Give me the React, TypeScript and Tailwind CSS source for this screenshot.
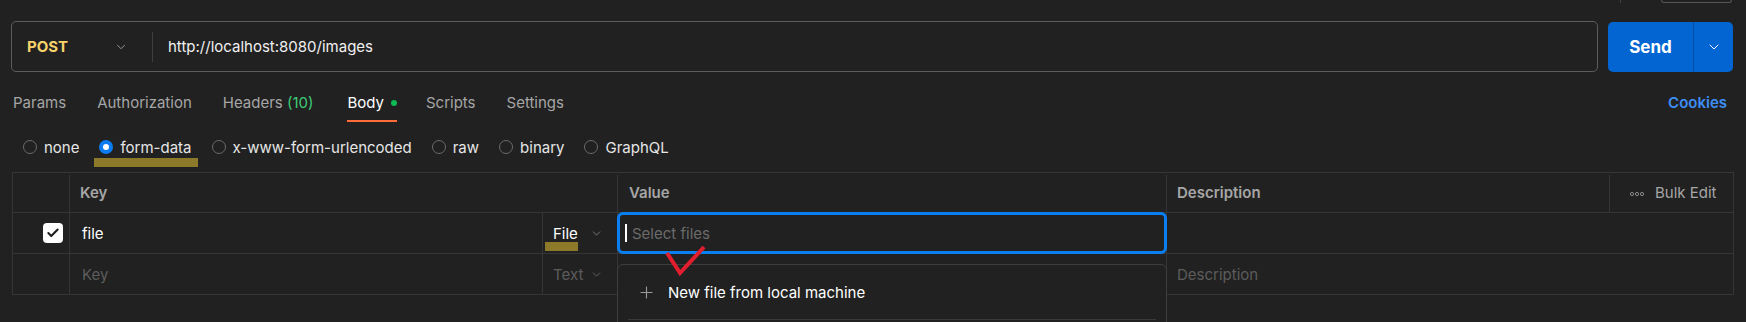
import { ChevronDown, Check, Plus } from 'lucide-react';

const tabs = [
  { label: 'Params' },
  { label: 'Authorization' },
  { label: 'Headers', count: '(10)' },
  { label: 'Body', active: true },
  { label: 'Scripts' },
  { label: 'Settings' },
];

const bodyTypes = ['none', 'form-data', 'x-www-form-urlencoded', 'raw', 'binary', 'GraphQL'];

function Radio({ label, checked }: { label: string; checked?: boolean }) {
  return (
    <div className="relative flex items-center gap-[7px]">
      {checked ? (
        <span className="flex h-[14px] w-[14px] items-center justify-center rounded-full bg-[#0a7cf0]">
          <span className="h-[6px] w-[6px] rounded-full bg-white" />
        </span>
      ) : (
        <span className="h-[14px] w-[14px] rounded-full border border-[#6b6b6b]" />
      )}
      <span className="pt-[2px] text-[#e6e6e6]">{label}</span>
      {/* surlignage jaune sous form-data */}
      {checked && <span className="absolute -left-[5px] top-[23px] h-[9px] w-[104px] bg-[#8c7a2a]" />}
    </div>
  );
}

function DotsIcon() {
  return (
    <svg width="14" height="6" viewBox="0 0 14 6" fill="none" stroke="#8a8a8a" strokeWidth="1">
      <circle cx="2" cy="3" r="1.6" />
      <circle cx="7" cy="3" r="1.6" />
      <circle cx="12" cy="3" r="1.6" />
    </svg>
  );
}

export default function App() {
  return (
    <div className="relative h-[322px] w-[1746px] overflow-hidden bg-[#212121] font-['Inter',sans-serif] text-[15px] text-white">
      {/* bouton coupé en haut */}
      <div className="flex h-[21px] items-start justify-end gap-[40px] pr-[14px]">
        <div className="h-[3px] w-px bg-[#444]" />
        <div className="h-[3px] w-[71px] rounded-b-[4px] border-x border-b border-[#555]" />
      </div>

      {/* barre URL */}
      <div className="flex items-start gap-[10px] pl-[11px] pr-[13px]">
        <div className="flex h-[51px] flex-1 items-center rounded-[5px] border border-[#5c5c5c]">
          <div className="flex w-[140px] items-center justify-between pl-[15px] pr-[24px]">
            <span className="pt-[2px] font-bold text-[#f7d36b]">POST</span>
            <ChevronDown size={14} strokeWidth={1.5} className="text-[#a6a6a6]" />
          </div>
          <div className="h-[30px] w-px bg-[#3f3f3f]" />
          <span className="pl-[15px] pt-[2px] text-[#f0f0f0]">http://localhost:8080/images</span>
        </div>
        <div className="mt-px flex h-[50px] w-[125px] overflow-hidden rounded-[5px] bg-[#0265d2]">
          <div className="flex w-[85px] items-center justify-center pt-[2px] text-[17px] font-bold">Send</div>
          <div className="w-px bg-[#0150a6]" />
          <div className="flex flex-1 items-center justify-center">
            <ChevronDown size={16} strokeWidth={1.5} />
          </div>
        </div>
      </div>

      {/* onglets */}
      <div className="flex h-[50px] items-end justify-between pl-[13px] pr-[19px]">
        <div className="flex gap-[31px]">
          {tabs.map((t) => (
            <div key={t.label} className={`flex flex-col ${t.active ? 'ml-[3px] -mr-[2px]' : ''}`}>
              <div className="flex h-[20px] items-center gap-[7px] leading-[20px]">
                <span className={t.active ? 'text-white' : 'text-[#a6a6a6]'}>
                  {t.label}
                  {t.count && <span className="text-[#3fcb77]"> {t.count}</span>}
                </span>
                {t.active && <span className="h-[6px] w-[6px] rounded-full bg-[#0cbb52]" />}
              </div>
              <div className={`mt-[7px] h-[2px] ${t.active ? 'bg-[#ff6c37]' : 'bg-transparent'}`} />
            </div>
          ))}
        </div>
        <div className="mb-[9px] flex h-[20px] items-center font-semibold text-[#3d8ef5]">Cookies</div>
      </div>

      {/* type de body */}
      <div className="flex h-[50px] items-center gap-[20px] pl-[23px]">
        {bodyTypes.map((b) => (
          <Radio key={b} label={b} checked={b === 'form-data'} />
        ))}
      </div>

      {/* tableau */}
      <div className="mx-[12px] border border-[#353535]">
        <div className="flex h-[40px] border-b border-[#353535] pt-[2px] font-semibold text-[#a6a6a6]">
          <div className="w-[57px] border-r border-[#353535]" />
          <div className="flex w-[548px] items-center border-r border-[#353535] pl-[10px]">Key</div>
          <div className="flex w-[549px] items-center border-r border-[#353535] pl-[11px]">Value</div>
          <div className="flex flex-1 items-center">
            <span className="flex-1 pl-[10px]">Description</span>
            <div className="flex h-full w-[124px] items-center gap-[11px] border-l border-[#353535] pl-[20px] font-normal">
              <DotsIcon />
              <span>Bulk Edit</span>
            </div>
          </div>
        </div>

        <div className="flex h-[41px] border-b border-[#353535]">
          <div className="flex w-[57px] items-center justify-end border-r border-[#353535] pr-[6px]">
            <span className="flex h-[20px] w-[20px] items-center justify-center rounded-[4px] bg-white">
              <Check size={14} strokeWidth={3.5} className="text-[#1c1c1c]" />
            </span>
          </div>
          <div className="flex w-[473px] items-center border-r border-[#353535] pl-[12px] pt-[2px]">file</div>
          <div className="relative flex w-[75px] items-center justify-between border-r border-[#353535] pl-[10px] pr-[14px]">
            <span className="pt-[2px]">File</span>
            <ChevronDown size={13} strokeWidth={1.5} className="text-[#8a8a8a]" />
            <span className="absolute left-[2px] top-[29px] h-[9px] w-[33px] bg-[#8c7a2a]" />
          </div>
          <div className="relative w-[549px] border-r border-[#353535]">
            <div className="absolute -inset-px flex items-center gap-[5px] rounded-[6px] border-[3px] border-[#0a7ff2] pl-[5px]">
              <span className="h-[18px] w-[2px] bg-white" />
              <span className="pt-[2px] text-[#6b6b6b]">Select files</span>
            </div>
          </div>
          <div className="flex-1" />
        </div>

        <div className="flex h-[40px]">
          <div className="w-[57px] border-r border-[#353535]" />
          <div className="flex w-[473px] items-center border-r border-[#353535] pl-[12px] pt-[2px] text-[#5c5c5c]">Key</div>
          <div className="flex w-[75px] items-center justify-between border-r border-[#353535] pl-[10px] pr-[14px] text-[#5c5c5c]">
            <span className="pt-[2px]">Text</span>
            <ChevronDown size={13} strokeWidth={1.5} className="text-[#6b6b6b]" />
          </div>
          <div className="w-[549px] border-r border-[#353535]" />
          <div className="flex flex-1 items-center pl-[10px] pt-[2px] text-[#5c5c5c]">Description</div>
        </div>
      </div>

      {/* menu déroulant */}
      <div className="absolute left-[617px] top-[264px] h-[80px] w-[550px] rounded-[6px] border border-[#3d3d3d] bg-[#212121]">
        <div className="flex h-[54px] items-center gap-[12px] pl-[19px]">
          <Plus size={19} strokeWidth={1.4} className="text-[#9a9a9a]" />
          <span className="pt-[2px]">New file from local machine</span>
        </div>
        <div className="mx-[10px] h-px bg-[#3a3a3a]" />
      </div>

      {/* coche rouge */}
      <svg className="absolute left-[660px] top-[242px]" width="52" height="38" viewBox="0 0 52 38" fill="none">
        <path d="M7 11 L20 31 L44 5" stroke="#e11d2e" strokeWidth="4" strokeLinejoin="miter" />
      </svg>
    </div>
  );
}
